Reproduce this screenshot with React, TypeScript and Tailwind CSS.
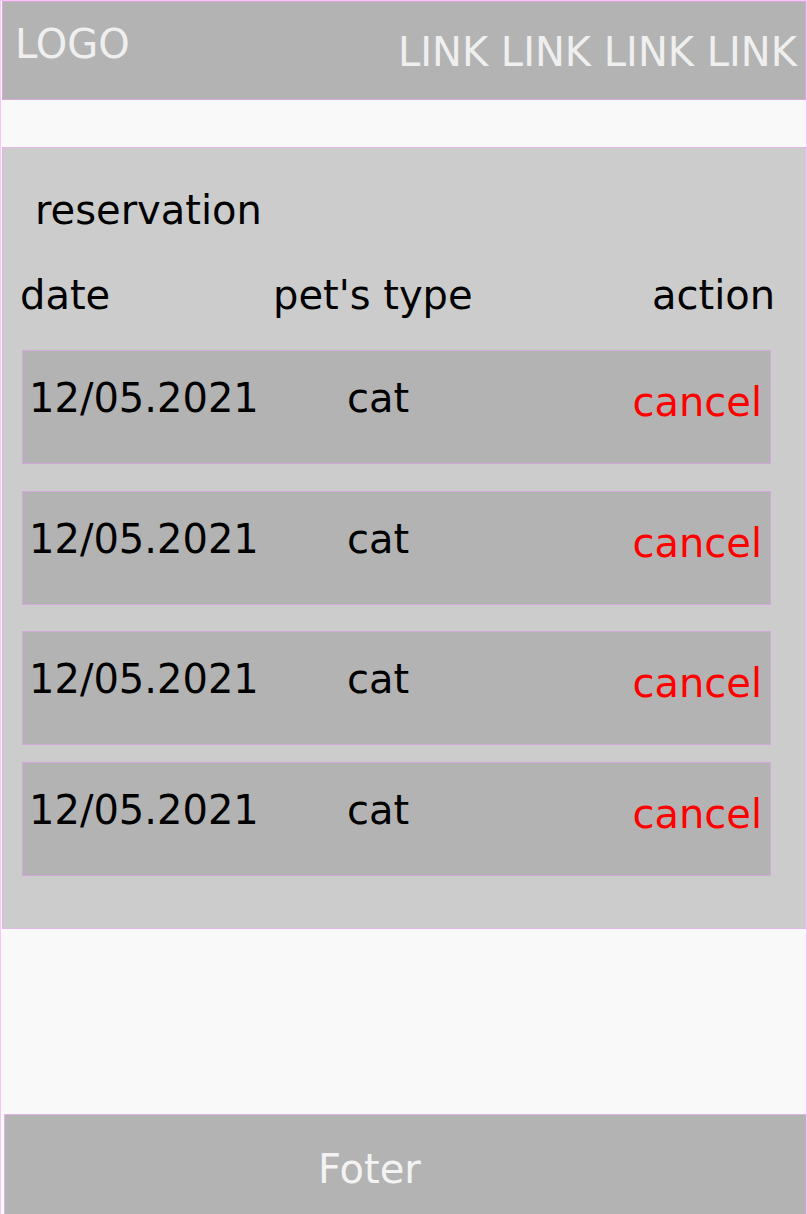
import React from "react"

const rows = [
  { date: "12/05.2021", pet: "cat", gapTop: "mt-[35px]" },
  { date: "12/05.2021", pet: "cat", gapTop: "mt-[27px]" },
  { date: "12/05.2021", pet: "cat", gapTop: "mt-[26px]" },
  { date: "12/05.2021", pet: "cat", gapTop: "mt-[17px]" },
]

function ReservationRow({ date, pet, gapTop }: { date: string; pet: string; gapTop: string }) {
  return (
    <div
      className={`${gapTop} ml-[19px] flex h-[114px] w-[749px] items-start border border-[#d3a6dc] bg-[#b3b3b3] pl-[6px] pr-[8px] pt-[27px] text-black`}
    >
      <span className="w-[318px]">{date}</span>
      <span className="flex-1">{pet}</span>
      <span className="mt-[4px] text-[#ff0000]">cancel</span>
    </div>
  )
}

export default function App() {
  return (
    <div className="relative min-h-[1214px] w-[807px] overflow-hidden border border-[#f6c6f6] bg-[#f9f9f9] font-['DejaVu_Sans',sans-serif] text-[40px] leading-[40px]">
      <header className="ml-px flex h-[99px] w-[804px] items-start justify-between border border-[#d7a9d9] bg-[#b3b3b3] pl-[12px] pr-[8px] text-[#efefef]">
        <span className="mt-[22px]">LOGO</span>
        <nav className="mt-[30px]">LINK LINK LINK LINK</nav>
      </header>

      <section className="ml-px mt-[47px] flex h-[782px] w-[805px] flex-col border border-[#e2b6e6] bg-[#cccccc] text-black">
        <h2 className="ml-[32px] mt-[42px] font-normal">reservation</h2>
        <div className="mt-[45px] flex">
          <span className="ml-[17px] w-[253px]">date</span>
          <span className="w-[379px]">pet's type</span>
          <span>action</span>
        </div>
        {rows.map((r, i) => (
          <ReservationRow key={i} {...r} />
        ))}
      </section>

      <footer className="ml-[3px] mt-[185px] h-[101px] w-[804px] border border-[#e0b2e6] bg-[#b3b3b3] pl-[313px] pt-[34px] text-[#f3f3f3]">
        Foter
      </footer>
    </div>
  )
}
